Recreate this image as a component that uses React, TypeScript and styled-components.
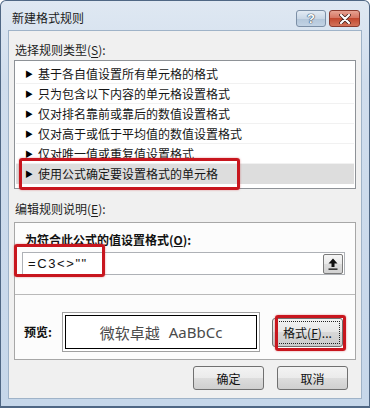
import React from "react"
import styled, {createGlobalStyle} from "styled-components"

const CJK = `"Noto Sans CJK SC", "Noto Sans", sans-serif`

const GlobalStyle = createGlobalStyle`
  html, body {
    margin: 0;
    padding: 0;
    width: 370px;
    height: 408px;
    overflow: hidden;
    background: #ffffff;
  }
  * {
    box-sizing: border-box;
  }
`

const RULE_TYPES = [
  "基于各自值设置所有单元格的格式",
  "只为包含以下内容的单元格设置格式",
  "仅对排名靠前或靠后的数值设置格式",
  "仅对高于或低于平均值的数值设置格式",
  "仅对唯一值或重复值设置格式",
  "使用公式确定要设置格式的单元格"
]

export default function App() {
  return (
    <>
      <GlobalStyle/>
      <Window>
        <TitleBar>
          <Title>新建格式规则</Title>
          <CaptionButtons>
            <HelpButton>?</HelpButton>
            <CloseButton>
              <svg width="12" height="10" viewBox="0 0 12 10">
                <path d="M2 1 L10 9 M10 1 L2 9" stroke="#3a1a14" strokeWidth="3.6" strokeLinecap="round"/>
                <path d="M2 1 L10 9 M10 1 L2 9" stroke="#ffffff" strokeWidth="2.2" strokeLinecap="round"/>
              </svg>
            </CloseButton>
          </CaptionButtons>
        </TitleBar>

        <Client>
          <Label>选择规则类型(<u>S</u>):</Label>
          <RuleList>
            {RULE_TYPES.map((name, i) => (
              <RuleRow key={name} selected={i === RULE_TYPES.length - 1}>
                <Arrow>▶</Arrow>
                <span>{name}</span>
              </RuleRow>
            ))}
          </RuleList>

          <Label $top={12}>编辑规则说明(<u>E</u>):</Label>
          <GroupBox>
            <FormulaArea>
              <BoldLabel>为符合此公式的值设置格式(<u>O</u>):</BoldLabel>
              <FormulaInput>
                <FormulaText>=C3&lt;&gt;""</FormulaText>
                <CollapseButton>
                  <svg width="10" height="12" viewBox="0 0 10 12">
                    <path d="M5 0.5 L9.5 5.5 L6.5 5.5 L6.5 9 L3.5 9 L3.5 5.5 L0.5 5.5 Z" fill="#111"/>
                    <rect x="0.5" y="10.5" width="9" height="1.3" fill="#111"/>
                  </svg>
                </CollapseButton>
              </FormulaInput>
            </FormulaArea>
            <Separator/>
            <PreviewRow>
              <PreviewLabel>预览:</PreviewLabel>
              <PreviewFrame>
                <PreviewInner>
                  <span>微软卓越</span>
                  <PreviewLatin>AaBbCc</PreviewLatin>
                </PreviewInner>
              </PreviewFrame>
              <FormatButton>
                <FocusRect>格式(<u>F</u>)...</FocusRect>
              </FormatButton>
            </PreviewRow>
          </GroupBox>

          <ButtonRow>
            <DialogButton>确定</DialogButton>
            <DialogButton>取消</DialogButton>
          </ButtonRow>
        </Client>

        <Highlight style={{left: 18, top: 157, width: 221, height: 32}}/>
        <Highlight style={{left: 13, top: 243, width: 91, height: 33}}/>
        <Highlight style={{left: 274, top: 314, width: 71, height: 36}}/>
      </Window>
    </>
  )
}

const Window = styled.div`
  position: relative;
  width: 370px;
  height: 408px;
  display: flex;
  flex-direction: column;
  border: 1px solid #4f6784;
  border-bottom-width: 2px;
  border-radius: 6px 6px 0 0;
  background: linear-gradient(#dfe8f2 0%, #d0dded 20%, #c6d7ea 100%);
  font-family: ${CJK};
`

const TitleBar = styled.div`
  height: 29px;
  display: flex;
  align-items: flex-start;
  justify-content: space-between;
  padding: 0 9px 0 11px;
`

const Title = styled.div`
  margin-top: 9px;
  font-size: 12px;
  line-height: 16px;
  color: #1b1b1b;
`

const CaptionButtons = styled.div`
  margin-top: 9px;
  display: flex;
  gap: 3px;
`

const CaptionButton = styled.div`
  height: 17px;
  display: flex;
  align-items: center;
  justify-content: center;
  border-radius: 3px;
`

const HelpButton = styled(CaptionButton)`
  width: 30px;
  border: 1px solid #7c8fa6;
  background: linear-gradient(#e3ebf4 0%, #c9d7e6 50%, #b3c6da 51%, #c2d3e5 100%);
  color: #ffffff;
  font-family: "Liberation Sans", Arial, sans-serif;
  font-weight: bold;
  font-size: 13px;
  text-shadow: 0 0 1px #33475e, 0 0 1px #33475e, 0 0 1px #33475e;
`

const CloseButton = styled(CaptionButton)`
  width: 31px;
  border: 1px solid #8a3a2e;
  background: linear-gradient(#e7a393 0%, #d67663 45%, #c2482f 50%, #d3735a 100%);
`

const Client = styled.div`
  flex: 1;
  margin: 0 7px 7px 7px;
  display: flex;
  flex-direction: column;
  padding: 11px 5px 0 5px;
  background: #f0f0f0;
  border: 1px solid #9fb3c8;
`

const Label = styled.div<{ $top?: number }>`
  margin-top: ${({$top}) => $top ?? 0}px;
  margin-left: 1px;
  font-size: 12px;
  line-height: 16px;
  color: #1e1e1e;

  u {
    text-underline-offset: 2px;
  }
`

const RuleList = styled.div`
  margin-top: 2px;
  height: 129px;
  display: flex;
  flex-direction: column;
  padding: 3px 1px 0 1px;
  background: #ffffff;
  border: 1px solid #8e9297;
`

const RuleRow = styled.div<{ selected: boolean }>`
  height: 20px;
  display: flex;
  align-items: center;
  padding-left: 9px;
  font-size: 12px;
  color: #151515;
  background: ${({selected}) => (selected ? "#dddddd" : "transparent")};
  border-bottom: 1px solid ${({selected}) => (selected ? "#dddddd" : "#f1f1f1")};
`

const Arrow = styled.span`
  width: 13px;
  font-size: 8px;
  color: #000000;
`

const GroupBox = styled.div`
  margin-top: 5px;
  height: 138px;
  display: flex;
  flex-direction: column;
  background: #fcfcfc;
  border: 1px solid #a7a7a7;
`

const FormulaArea = styled.div`
  height: 71px;
  display: flex;
  flex-direction: column;
  padding: 9px 10px 0 7px;
`

const BoldLabel = styled.div`
  padding-left: 3px;
  font-size: 12px;
  line-height: 16px;
  font-weight: bold;
  color: #111111;
  white-space: nowrap;
`

const PreviewLabel = styled(BoldLabel)`
  width: 41px;
  flex-shrink: 0;
`

const FormulaInput = styled.div`
  margin-top: 4px;
  height: 23px;
  display: flex;
  align-items: center;
  justify-content: space-between;
  padding: 0 1px 0 5px;
  background: #ffffff;
  border: 1px solid #aeb1b6;
`

const FormulaText = styled.span`
  font-family: "Liberation Sans", Arial, sans-serif;
  font-size: 13px;
  letter-spacing: 1.6px;
  color: #111111;
`

const CollapseButton = styled.div`
  width: 20px;
  height: 20px;
  display: flex;
  align-items: center;
  justify-content: center;
  border: 1px solid #7a7a7a;
  border-radius: 2px;
  background: linear-gradient(#f6f6f6 0%, #e9e9e9 50%, #dcdcdc 51%, #d2d2d2 100%);
`

const Separator = styled.div`
  height: 1px;
  background: #b9b9b9;
`

const PreviewRow = styled.div`
  flex: 1;
  display: flex;
  align-items: center;
  padding: 14px 0 4px 6px;
`

const PreviewFrame = styled.div`
  width: 198px;
  height: 40px;
  flex-shrink: 0;
  padding: 2px;
  border: 1px solid #a0a0a0;
  background: #ffffff;
`

const PreviewInner = styled.div`
  height: 100%;
  display: flex;
  align-items: center;
  justify-content: center;
  gap: 9px;
  border: 1px solid #000000;
  font-size: 15px;
  color: #4a4a4a;
`

const PreviewLatin = styled.span`
  font-family: "Noto Sans", sans-serif;
`

const ButtonBase = styled.div`
  width: 71px;
  flex-shrink: 0;
  display: flex;
  align-items: center;
  justify-content: center;
  font-size: 12px;
  color: #111111;
  border: 1px solid #707070;
  border-radius: 3px;
  background: linear-gradient(#f3f3f3 0%, #ebebeb 48%, #dddddd 50%, #cfcfcf 100%);
`

const FormatButton = styled(ButtonBase)`
  margin-left: 12px;
  height: 29px;
  padding: 2px;
  background: linear-gradient(#f2f2f2 0%, #e6e6e6 48%, #d8d8d8 50%, #cbcbcb 100%);
`

const FocusRect = styled.div`
  width: 100%;
  height: 100%;
  display: flex;
  align-items: center;
  justify-content: center;
  border: 1px dotted #222222;
`

const ButtonRow = styled.div`
  margin-top: 6px;
  display: flex;
  justify-content: flex-end;
  gap: 13px;
  padding-right: 8px;
`

const DialogButton = styled(ButtonBase)`
  height: 24px;
`

const Highlight = styled.div`
  position: absolute;
  border: 3px solid #c8161e;
  border-radius: 3px;
  box-shadow: 0 0 2px rgba(200, 22, 30, 0.5);
  pointer-events: none;
`
